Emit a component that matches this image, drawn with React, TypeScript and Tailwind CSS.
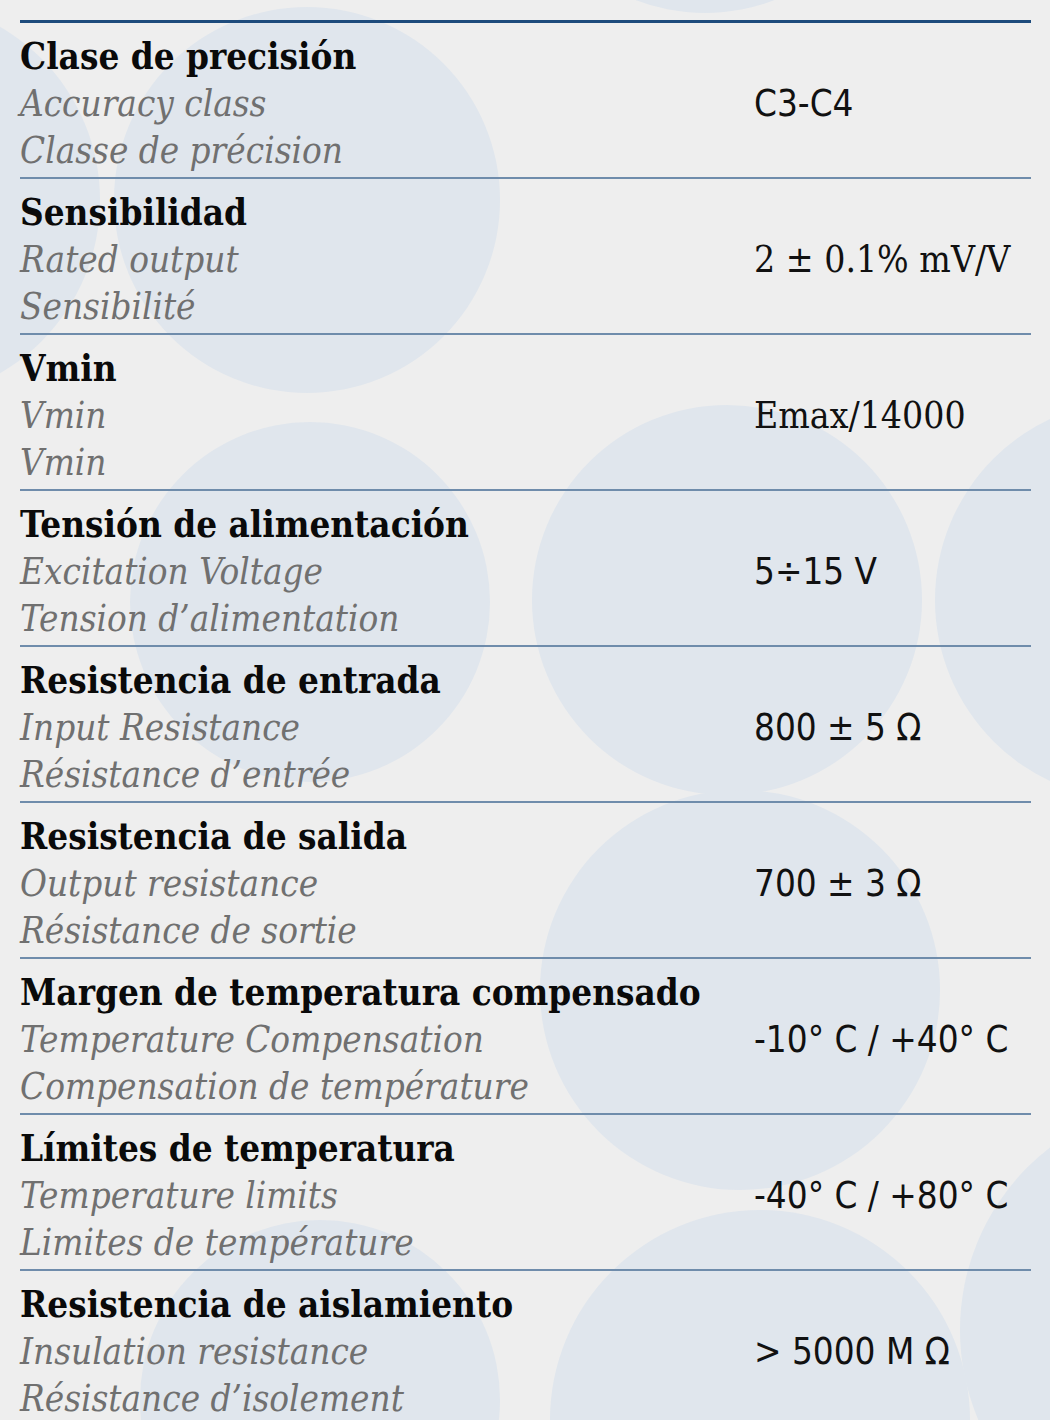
import React from 'react';

type Spec = {
    es: string;
    en: string;
    fr: string;
    value: string;
    serif?: boolean;
};

const specs: Spec[] = [
    { es: 'Clase de precisión', en: 'Accuracy class', fr: 'Classe de précision', value: 'C3-C4' },
    { es: 'Sensibilidad', en: 'Rated output', fr: 'Sensibilité', value: '2 ± 0.1% mV/V', serif: true },
    { es: 'Vmin', en: 'Vmin', fr: 'Vmin', value: 'Emax/14000', serif: true },
    { es: 'Tensión de alimentación', en: 'Excitation Voltage', fr: 'Tension d’alimentation', value: '5÷15 V' },
    { es: 'Resistencia de entrada', en: 'Input Resistance', fr: 'Résistance d’entrée', value: '800 ± 5 Ω' },
    { es: 'Resistencia de salida', en: 'Output resistance', fr: 'Résistance de sortie', value: '700 ± 3 Ω' },
    { es: 'Margen de temperatura compensado', en: 'Temperature Compensation', fr: 'Compensation de température', value: '-10° C / +40° C' },
    { es: 'Límites de temperatura', en: 'Temperature limits', fr: 'Limites de température', value: '-40° C / +80° C' },
    { es: 'Resistencia de aislamiento', en: 'Insulation resistance', fr: 'Résistance d’isolement', value: '> 5000 M Ω' },
];

// faint background bubbles [x, y, r]
const bubbles: [number, number, number][] = [
    [-100, 200, 200],
    [307, 200, 193],
    [705, -180, 193],
    [310, 602, 180],
    [727, 600, 195],
    [1135, 600, 200],
    [740, 990, 200],
    [1190, 1330, 230],
    [320, 1400, 180],
    [760, 1420, 210],
];

const App: React.FC = () => {
    return (
        <div className="relative w-[1050px] h-[1420px] overflow-hidden bg-[#eeeeee]">
            {bubbles.map(([x, y, r], i) => (
                <div
                    key={i}
                    className="absolute rounded-full bg-[#e0e6ed]"
                    style={{ left: x - r, top: y - r, width: r * 2, height: r * 2 }}
                />
            ))}

            <div className="relative pt-[20px] pl-[20px] pr-[19px]">
                <div className="border-t-[3px] border-[#1d4b7c]">
                    {specs.map((s, i) => (
                        <div
                            key={i}
                            className={`flex items-center pt-[10px] pb-[3px] ${i < specs.length - 1 ? 'border-b-2 border-[#6f8cab]' : ''}`}
                        >
                            <div className="w-[734px] font-['DejaVu_Serif_Condensed','DejaVu_Serif',serif]">
                                <div className="text-[36.5px] leading-[47px] font-bold text-[#0a0a0a]">{s.es}</div>
                                <div className="text-[36.5px] leading-[47px] italic text-[#707070]">{s.en}</div>
                                <div className="text-[36.5px] leading-[47px] italic text-[#707070]">{s.fr}</div>
                            </div>
                            <div
                                className={`leading-[47px] text-[#111111] ${s.serif ? "text-[37px] font-['DejaVu_Serif_Condensed','DejaVu_Serif',serif]" : "text-[36.5px] font-['DejaVu_Sans_Condensed','DejaVu_Sans',sans-serif]"}`}
                            >
                                {s.value}
                            </div>
                        </div>
                    ))}
                </div>
            </div>
        </div>
    );
};

export default App;
